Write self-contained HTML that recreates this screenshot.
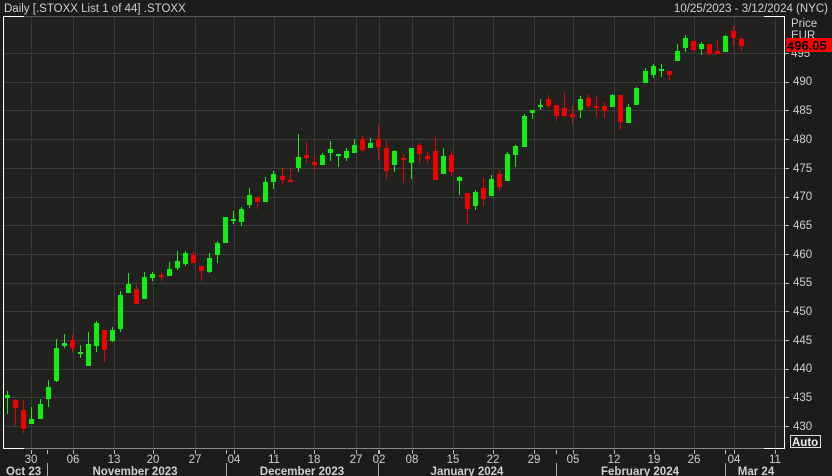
<!DOCTYPE html>
<html><head><meta charset="utf-8"><style>
html,body{margin:0;padding:0;background:#1c1c1c;width:832px;height:476px;overflow:hidden}
svg{display:block}
text{font-family:"Liberation Sans Narrow","Liberation Sans",sans-serif;font-size:11.5px;fill:#cfcfcf}
</style></head><body>
<svg id="s" width="832" height="476" viewBox="0 0 832 476" xmlns="http://www.w3.org/2000/svg">
<rect x="0" y="0" width="832" height="476" fill="#1c1c1c"/>
<rect x="3" y="16" width="782" height="432" fill="#21211f"/>
<g id="grid" stroke="#3b3b3b" stroke-width="1"></g>
<g id="c"></g>
<line x1="3" y1="16.5" x2="785" y2="16.5" stroke="#555"/>
<line x1="3" y1="16.5" x2="24" y2="16.5" stroke="#fff"/>
<line x1="764" y1="16.5" x2="785" y2="16.5" stroke="#fff"/>
<line x1="3.5" y1="16" x2="3.5" y2="449" stroke="#fff"/>
<line x1="784.5" y1="16" x2="784.5" y2="449" stroke="#fff"/>
<line x1="3" y1="448.5" x2="785" y2="448.5" stroke="#888"/>
<line x1="3" y1="448.5" x2="24" y2="448.5" stroke="#fff"/>
<line x1="764" y1="448.5" x2="785" y2="448.5" stroke="#fff"/>
<g id="ticks" stroke="#bbb"></g>
<text x="4" y="12">Daily [.STOXX List 1 of 44] .STOXX</text>
<text x="828" y="12" text-anchor="end">10/25/2023 - 3/12/2024 (NYC)</text>
<text x="791" y="27">Price</text>
<text x="791" y="39">EUR</text>
<g id="py"></g>
<text x="791" y="57">495</text>
<text x="793" y="85">490</text>
<text x="793" y="114">485</text>
<text x="793" y="143">480</text>
<text x="793" y="172">475</text>
<text x="793" y="200">470</text>
<text x="793" y="229">465</text>
<text x="793" y="258">460</text>
<text x="793" y="286">455</text>
<text x="793" y="315">450</text>
<text x="793" y="344">445</text>
<text x="793" y="372">440</text>
<text x="793" y="401">435</text>
<text x="793" y="430">430</text>
<rect x="786" y="38" width="46" height="14" fill="#ff0000"/>
<text x="787" y="50" style="fill:#000;font-size:13px;font-weight:bold">496.05</text>
<rect x="790.5" y="435.5" width="30" height="12" fill="none" stroke="#ddd"/>
<text x="792" y="446" style="fill:#eee;font-weight:bold">Auto</text>
<text x="31" y="463" text-anchor="middle">30</text>
<text x="73" y="463" text-anchor="middle">06</text>
<text x="114" y="463" text-anchor="middle">13</text>
<text x="153" y="463" text-anchor="middle">20</text>
<text x="195" y="463" text-anchor="middle">27</text>
<text x="234" y="463" text-anchor="middle">04</text>
<text x="274" y="463" text-anchor="middle">11</text>
<text x="314" y="463" text-anchor="middle">18</text>
<text x="356" y="463" text-anchor="middle">27</text>
<text x="379" y="463" text-anchor="middle">02</text>
<text x="412" y="463" text-anchor="middle">08</text>
<text x="453" y="463" text-anchor="middle">15</text>
<text x="493" y="463" text-anchor="middle">22</text>
<text x="534" y="463" text-anchor="middle">29</text>
<text x="573" y="463" text-anchor="middle">05</text>
<text x="614" y="463" text-anchor="middle">12</text>
<text x="654" y="463" text-anchor="middle">19</text>
<text x="694" y="463" text-anchor="middle">26</text>
<text x="734" y="463" text-anchor="middle">04</text>
<text x="775" y="463" text-anchor="middle">11</text>
<g style="font-weight:bold">
<text x="6" y="475">Oct 23</text>
<text x="135" y="475" text-anchor="middle">November 2023</text>
<text x="302" y="475" text-anchor="middle">December 2023</text>
<text x="467" y="475" text-anchor="middle">January 2024</text>
<text x="640" y="475" text-anchor="middle">February 2024</text>
<text x="756" y="475" text-anchor="middle">Mar 24</text>
</g>
<g stroke="#aaa">
<line x1="47.5" y1="463" x2="47.5" y2="476"/>
<line x1="226.5" y1="463" x2="226.5" y2="476"/>
<line x1="378.5" y1="463" x2="378.5" y2="476"/>
<line x1="556.5" y1="463" x2="556.5" y2="476"/>
<line x1="725.5" y1="463" x2="725.5" y2="476"/>
</g>
</svg>
<script>
var NS="http://www.w3.org/2000/svg";
function el(p,t,a){var e=document.createElementNS(NS,t);for(var k in a)e.setAttribute(k,a[k]);p.appendChild(e);return e;}
var g=document.getElementById("grid");
var xs=[31,73,114,153,195,234,274,314,356,379,412,453,493,534,573,614,654,694,734,775];
xs.forEach(function(x){el(g,"line",{x1:x+.5,y1:17,x2:x+.5,y2:448});});
for(var i=0;i<14;i++){var y=Math.round(53+i*28.7)+.5;el(g,"line",{x1:4,y1:y,x2:784,y2:y});}
var tk=document.getElementById("ticks");
xs.concat([47,226,378,556,725]).forEach(function(x){el(tk,"line",{x1:x+.5,y1:450,x2:x+.5,y2:454});});
var py=document.getElementById("py");
for(var i=0;i<14;i++){var y=Math.round(53+i*28.7)+.5;el(py,"line",{x1:785,y1:y,x2:789,y2:y,stroke:"#bbb"});}
var d=[
"G395,398,391,414","R400,408,399,425","R410,429,400,433","G419,424,407,424","G404,419,399,419","G387,399,380,407","G348,381,339,382","G343,346,334,348","R340,348,335,352","G352,354,345,358",
"G344,366,332,366","G323,346,321,352","R330,350,330,362","G330,341,327,342","G295,329,291,332","G284,293,273,293","R289,304,285,304","G277,299,272,299","G274,278,272,281","R275,277,272,281",
"G269,276,262,276","G261,268,251,270","G253,264,251,266","R255,263,252,263","R266,271,266,281","G258,272,253,273","G243,255,241,263","G217,243,217,243","G219,221,211,224","G209,222,207,226",
"G195,205,188,208","R197,202,197,209","G182,202,177,202","G174,182,171,189","R176,180,168,185","R180,182,169,182","G157,168,134,172","R155,158,142,163","R162,165,156,171","G155,165,153,165",
"G149,153,141,161","G154,156,154,167","G151,158,148,161","G145,153,139,153","R139,150,135,152","G143,148,138,148","R139,147,125,160","R148,171,141,179","G151,165,150,172","R158,159,154,183",
"G148,163,148,179","R145,154,143,163","R156,159,152,163","R151,180,137,180","G156,174,148,174","R155,172,151,176","G177,181,176,195","R193,209,193,224","G192,206,190,210","R188,199,178,206",
"G179,196,175,196","R174,187,170,191","G154,181,152,181","G146,155,145,167","G116,147,114,147","G110,113,110,119","G105,106,99,110","R99,106,95,108","R105,116,105,121","R108,116,93,117",
"R114,117,105,123","G99,110,96,118","R98,106,94,108","R106,108,96,117","R106,111,102,118","G95,107,94,107","R95,122,95,130","G107,123,104,123","G88,105,87,105","G71,83,68,83",
"G66,75,64,78","G69,70,64,77","R71,75,71,80","G51,61,44,61","G38,48,35,52","R41,50,41,51","G44,49,42,55","R44,54,44,57","R51,54,41,54","G36,52,35,52",
"R31,38,26,46","R39,46,37,51"];
var c=document.getElementById("c");
d.forEach(function(s,i){
 var col=s[0]=="G"?"#12ee12":"#f20000";var v=s.slice(1).split(",").map(Number);
 var x=Math.round(7.3+i*8.066);
 el(c,"rect",{x:x,y:v[2],width:1,height:Math.max(1,v[3]-v[2]),fill:col});
 el(c,"rect",{x:x-2,y:v[0],width:5,height:Math.max(2,v[1]-v[0]),fill:col});
});
</script>
</body></html>
